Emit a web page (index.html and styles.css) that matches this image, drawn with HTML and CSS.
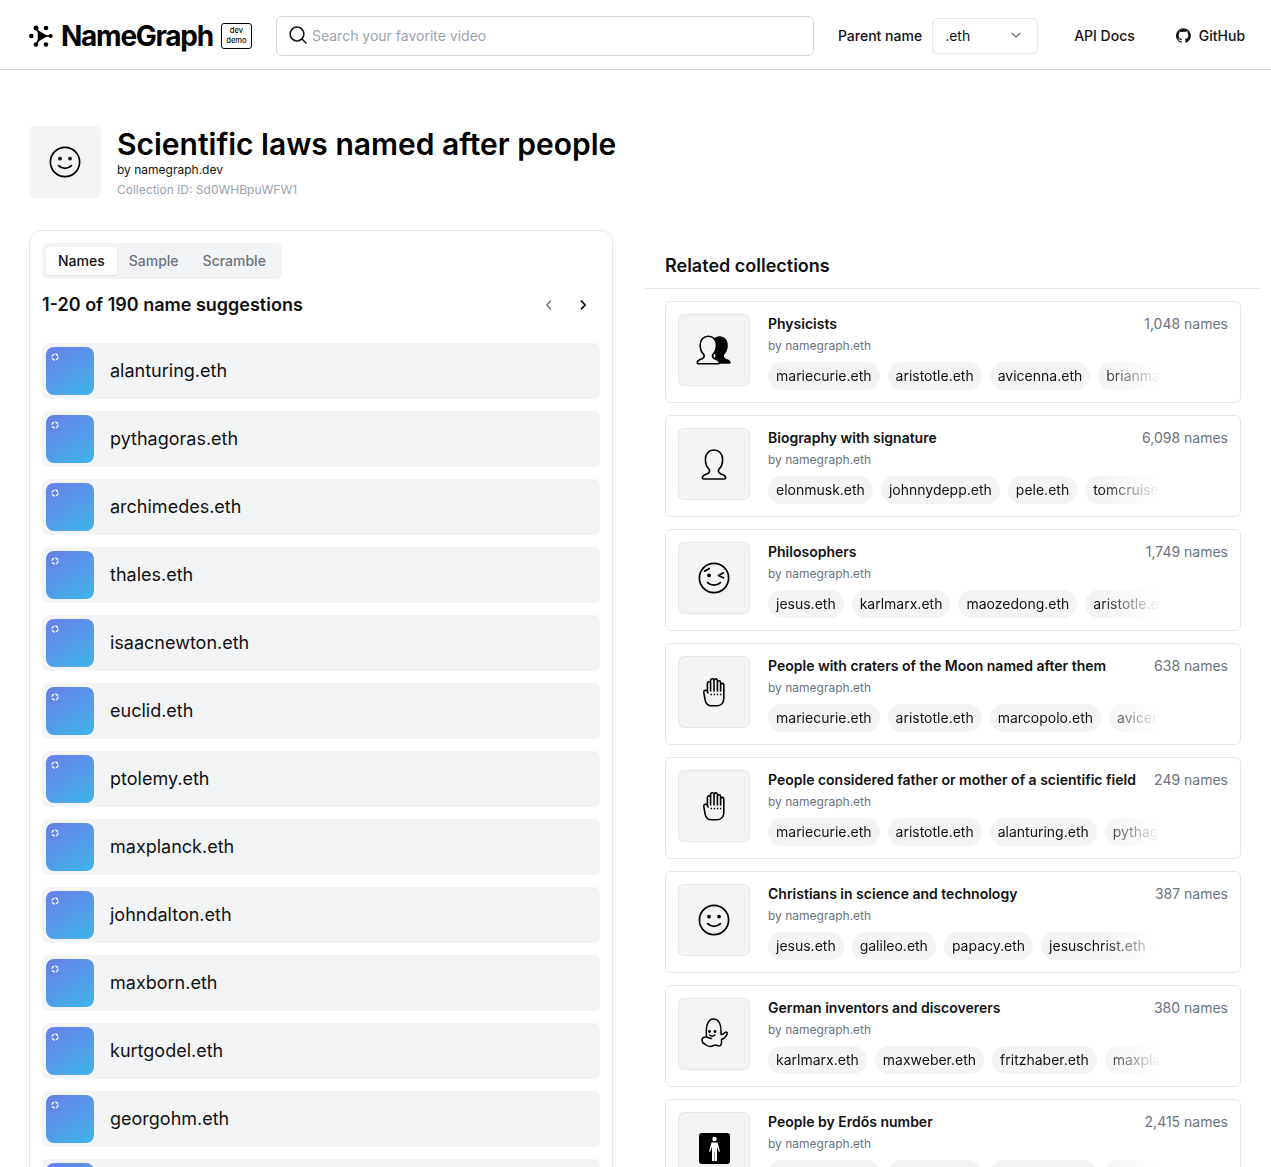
FILE: index.html
```html
<!DOCTYPE html>
<html lang="en">
<head>
    <meta charset="UTF-8">
    <meta name="viewport" content="width=device-width, initial-scale=1.0">
    <title>NameGraph - Scientific laws named after people</title>
    <link rel="stylesheet" href="styles.css">
</head>
<body>

    <svg class="sprites" width="0" height="0">
        <symbol id="ring" viewBox="0 0 8 8">
            <circle cx="4" cy="4" r="3" fill="none" stroke="#fff" stroke-width="1.3" stroke-dasharray="3.6 1.1"/>
        </symbol>
        <symbol id="smile" viewBox="0 0 32 32">
            <circle cx="16" cy="16" r="14.6" fill="none" stroke="#000" stroke-width="1.7"/>
            <circle cx="11" cy="12.6" r="1.9"/>
            <circle cx="21" cy="12.6" r="1.9"/>
            <path d="M9.6 19.6c3.4 3.6 9.4 3.6 12.8 0" fill="none" stroke="#000" stroke-width="1.7" stroke-linecap="round"/>
        </symbol>
        <symbol id="wink" viewBox="0 0 32 32">
            <circle cx="16" cy="16" r="14.6" fill="none" stroke="#000" stroke-width="1.7"/>
            <circle cx="11" cy="13.4" r="1.9"/>
            <path d="M6.6 9.2l4.6-2.8M25.4 10.8l-5 2.6 5 2.4M9.6 20.6c3.4 3.4 9.4 3.4 12.8 0" fill="none" stroke="#000" stroke-width="1.7" stroke-linecap="round" stroke-linejoin="round"/>
        </symbol>
        <symbol id="hand" viewBox="0 0 24 30">
            <path d="M5.4 15V6.4a1.6 1.6 0 0 1 3.2 0M8.6 14V3.4a1.7 1.7 0 0 1 3.4 0V14M12 3.6a1.7 1.7 0 0 1 3.4 0V14M15.4 5.4a1.6 1.6 0 0 1 3.2 0V14M18.6 8a1.6 1.6 0 0 1 3.2 0v13.4c0 4.4-2.8 7.4-7 7.4H9.4c-3.6 0-5.6-2.4-6.2-5.4l-1.4-8c-.3-2.2 2.6-3 3.6-.9l.6 1.5" fill="none" stroke="#000" stroke-width="1.6" stroke-linecap="round" stroke-linejoin="round"/>
            <path d="M8.6 17.5h11" fill="none" stroke="#000" stroke-width="1.4" stroke-dasharray="1.4 1.7"/>
        </symbol>
        <symbol id="person" viewBox="0 0 26 31">
            <path d="M13 1C7.800 1 4.400 5 4.400 10.500c0 4 1.600 8 4 10 .6 2-.4 3.500-2 4.200-2 .8-4.800 1.500-5 3.800-.1 1 .3 1.500 1.200 1.500h20.800c.9 0 1.300-.5 1.200-1.500-.2-2.300-3-3-5-3.800-1.600-.7-2.600-2.200-2-4.200 2.400-2 4-6 4-10C21.600 5 18.200 1 13 1z" fill="none" stroke="#000" stroke-width="1.6" stroke-linejoin="round"/>
        </symbol>
    </svg>

    <header class="topbar">
        <a class="logo" href="#">
            <svg class="logo-mark" width="24" height="22" viewBox="0 0 24 22">
                <path d="M12 11H22M12 11L7 3M12 11L7 19.500" stroke="#000" stroke-width="1.500"/>
                <path d="M9.500 6.500l7.500 4.500-7.500 4.500z" stroke="#000" stroke-width="1.500" stroke-linejoin="round"/>
                <circle cx="2.300" cy="11" r="2.300"/>
                <circle cx="21.700" cy="11" r="2"/>
                <circle cx="7" cy="3" r="2.500"/>
                <circle cx="17" cy="3" r="2.300"/>
                <circle cx="7" cy="19.500" r="2.300"/>
                <circle cx="17" cy="19.500" r="2.300"/>
            </svg>
            <span class="logo-text">NameGraph</span>
        </a>
        <span class="badge">dev<br>demo</span>
        <div class="search">
            <svg width="18" height="18" viewBox="0 0 18 18" fill="none" stroke="#111" stroke-width="1.5" stroke-linecap="round">
                <circle cx="8" cy="8" r="6.9"/>
                <path d="M13 13l4 4"/>
            </svg>
            <span>Search your favorite video</span>
        </div>
        <span class="nav-label">Parent name</span>
        <div class="select">
            <span>.eth</span>
            <svg width="12" height="12" viewBox="0 0 12 12" fill="none" stroke="#6b7280" stroke-width="1.3" stroke-linecap="round" stroke-linejoin="round">
                <path d="M2 4.200l4 3.800 4-3.800"/>
            </svg>
        </div>
        <a class="nav-link api-link" href="#">API Docs</a>
        <a class="nav-link github-link" href="#">
            <svg width="15" height="15" viewBox="0 0 16 16" fill="#111">
                <path d="M8 .2a8 8 0 0 0-2.500 15.600c.4.1.5-.2.5-.4v-1.400c-2.200.5-2.700-1-2.700-1-.4-.9-.9-1.200-.9-1.200-.7-.5.1-.5.1-.5.8.1 1.200.8 1.200.8.7 1.200 1.900.9 2.300.7.1-.5.3-.9.5-1.100-1.800-.2-3.600-.9-3.600-4 0-.9.3-1.600.8-2.100-.1-.2-.4-1 .1-2.100 0 0 .7-.2 2.200.8a7.600 7.600 0 0 1 4 0c1.500-1 2.200-.8 2.200-.8.400 1.100.200 1.900.100 2.100.500.600.800 1.300.800 2.100 0 3.100-1.900 3.700-3.600 3.900.300.300.500.800.500 1.500v2.200c0 .2.100.5.600.4A8 8 0 0 0 8 .2z"/>
            </svg>
            GitHub
        </a>
    </header>

    <main class="page">
        <section class="title-block">
            <div class="icon-box title-icon">
                <svg width="32" height="32"><use href="#smile"/></svg>
            </div>
            <div>
                <h1>Scientific laws named after people</h1>
                <p class="byline">by namegraph.dev</p>
                <p class="collection-id">Collection ID: Sd0WHBpuWFW1</p>
            </div>
        </section>

        <div class="columns">
            <section class="names-card">
                <div class="tabs">
                    <span class="tab active">Names</span>
                    <span class="tab">Sample</span>
                    <span class="tab">Scramble</span>
                </div>
                <div class="names-head">
                    <h2>1-20 of 190 name suggestions</h2>
                    <div class="pager">
                        <svg width="12" height="12" viewBox="0 0 12 12" fill="none" stroke="#6b7280" stroke-width="1.5" stroke-linecap="round" stroke-linejoin="round"><path d="M7.600 2L3.800 6l3.800 4"/></svg>
                        <svg width="12" height="12" viewBox="0 0 12 12" fill="none" stroke="#000" stroke-width="1.700" stroke-linecap="round" stroke-linejoin="round"><path d="M4.400 2l3.800 4-3.800 4"/></svg>
                    </div>
                </div>
                <ul class="name-list">
                    <li class="name-row"><span class="thumb"><svg width="8" height="8"><use href="#ring"/></svg></span>alanturing.eth</li>
                    <li class="name-row"><span class="thumb"><svg width="8" height="8"><use href="#ring"/></svg></span>pythagoras.eth</li>
                    <li class="name-row"><span class="thumb"><svg width="8" height="8"><use href="#ring"/></svg></span>archimedes.eth</li>
                    <li class="name-row"><span class="thumb"><svg width="8" height="8"><use href="#ring"/></svg></span>thales.eth</li>
                    <li class="name-row"><span class="thumb"><svg width="8" height="8"><use href="#ring"/></svg></span>isaacnewton.eth</li>
                    <li class="name-row"><span class="thumb"><svg width="8" height="8"><use href="#ring"/></svg></span>euclid.eth</li>
                    <li class="name-row"><span class="thumb"><svg width="8" height="8"><use href="#ring"/></svg></span>ptolemy.eth</li>
                    <li class="name-row"><span class="thumb"><svg width="8" height="8"><use href="#ring"/></svg></span>maxplanck.eth</li>
                    <li class="name-row"><span class="thumb"><svg width="8" height="8"><use href="#ring"/></svg></span>johndalton.eth</li>
                    <li class="name-row"><span class="thumb"><svg width="8" height="8"><use href="#ring"/></svg></span>maxborn.eth</li>
                    <li class="name-row"><span class="thumb"><svg width="8" height="8"><use href="#ring"/></svg></span>kurtgodel.eth</li>
                    <li class="name-row"><span class="thumb"><svg width="8" height="8"><use href="#ring"/></svg></span>georgohm.eth</li>
                    <li class="name-row"><span class="thumb"><svg width="8" height="8"><use href="#ring"/></svg></span></li>
                </ul>
            </section>

            <section class="related">
                <h2 class="related-title">Related collections</h2>
                <div class="related-list">

                    <article class="collection">
                        <div class="icon-box">
                            <svg width="36" height="30" viewBox="0 0 38 31">
                                <g transform="translate(12 0)"><path d="M13 1C7.800 1 4.400 5 4.400 10.500c0 4 1.600 8 4 10 .6 2-.4 3.500-2 4.200-2 .8-4.800 1.500-5 3.800-.1 1 .3 1.500 1.200 1.500h20.800c.9 0 1.300-.5 1.200-1.500-.2-2.300-3-3-5-3.800-1.600-.7-2.600-2.200-2-4.200 2.400-2 4-6 4-10C21.600 5 18.200 1 13 1z"/></g>
                                <path d="M13 1C7.800 1 4.400 5 4.400 10.500c0 4 1.600 8 4 10 .6 2-.4 3.500-2 4.200-2 .8-4.800 1.500-5 3.800-.1 1 .3 1.500 1.200 1.500h20.800c.9 0 1.300-.5 1.200-1.500-.2-2.300-3-3-5-3.800-1.600-.7-2.600-2.200-2-4.200 2.400-2 4-6 4-10C21.600 5 18.200 1 13 1z" fill="#f3f4f6" stroke="#000" stroke-width="1.700" stroke-linejoin="round"/>
                            </svg>
                        </div>
                        <div class="collection-body">
                            <div class="collection-head"><h3>Physicists</h3><span class="count">1,048 names</span></div>
                            <p class="collection-by">by namegraph.eth</p>
                            <div class="chips"><span class="chip">mariecurie.eth</span><span class="chip">aristotle.eth</span><span class="chip">avicenna.eth</span><span class="chip">brianmay.eth</span></div>
                        </div>
                    </article>

                    <article class="collection">
                        <div class="icon-box"><svg width="26" height="31"><use href="#person"/></svg></div>
                        <div class="collection-body">
                            <div class="collection-head"><h3>Biography with signature</h3><span class="count">6,098 names</span></div>
                            <p class="collection-by">by namegraph.eth</p>
                            <div class="chips"><span class="chip">elonmusk.eth</span><span class="chip">johnnydepp.eth</span><span class="chip">pele.eth</span><span class="chip">tomcruise.eth</span></div>
                        </div>
                    </article>

                    <article class="collection">
                        <div class="icon-box"><svg width="32" height="32"><use href="#wink"/></svg></div>
                        <div class="collection-body">
                            <div class="collection-head"><h3>Philosophers</h3><span class="count">1,749 names</span></div>
                            <p class="collection-by">by namegraph.eth</p>
                            <div class="chips"><span class="chip">jesus.eth</span><span class="chip">karlmarx.eth</span><span class="chip">maozedong.eth</span><span class="chip">aristotle.eth</span></div>
                        </div>
                    </article>

                    <article class="collection">
                        <div class="icon-box"><svg width="24" height="30"><use href="#hand"/></svg></div>
                        <div class="collection-body">
                            <div class="collection-head"><h3>People with craters of the Moon named after them</h3><span class="count">638 names</span></div>
                            <p class="collection-by">by namegraph.eth</p>
                            <div class="chips"><span class="chip">mariecurie.eth</span><span class="chip">aristotle.eth</span><span class="chip">marcopolo.eth</span><span class="chip">avicenna.eth</span></div>
                        </div>
                    </article>

                    <article class="collection">
                        <div class="icon-box"><svg width="24" height="30"><use href="#hand"/></svg></div>
                        <div class="collection-body">
                            <div class="collection-head"><h3>People considered father or mother of a scientific field</h3><span class="count">249 names</span></div>
                            <p class="collection-by">by namegraph.eth</p>
                            <div class="chips"><span class="chip">mariecurie.eth</span><span class="chip">aristotle.eth</span><span class="chip">alanturing.eth</span><span class="chip">pythagoras.eth</span></div>
                        </div>
                    </article>

                    <article class="collection">
                        <div class="icon-box"><svg width="32" height="32"><use href="#smile"/></svg></div>
                        <div class="collection-body">
                            <div class="collection-head"><h3>Christians in science and technology</h3><span class="count">387 names</span></div>
                            <p class="collection-by">by namegraph.eth</p>
                            <div class="chips"><span class="chip">jesus.eth</span><span class="chip">galileo.eth</span><span class="chip">papacy.eth</span><span class="chip">jesuschrist.eth</span></div>
                        </div>
                    </article>

                    <article class="collection">
                        <div class="icon-box">
                            <svg width="40" height="42" viewBox="0 0 40 42" fill="none" stroke="#000" stroke-width="1.500" stroke-linecap="round" stroke-linejoin="round">
                                <path d="M12.500 24C11.500 14 13.500 6 19.500 6 25 6 27.200 12 27 18v3.500c1.500.5 3-1 4-2 1.500-1 3 .5 2 2-1.500 3-3.500 4.500-5.500 5V30c0 2.500-2 3.500-4 2.500-1.500-.5-2.500-1-4 0-2.500 1.500-6 1-8-1-1.500-.5-3-1.500-3.500-3.500-.5-3 2-4.500 4.500-4 2 .5 3 1.500 5 1.500"/>
                                <path d="M15.500 22c1.500 1.300 4 1.300 5.500 0"/>
                                <circle cx="15.500" cy="18.500" r=".7" fill="#000"/>
                                <circle cx="21" cy="18.500" r=".7" fill="#000"/>
                            </svg>
                        </div>
                        <div class="collection-body">
                            <div class="collection-head"><h3>German inventors and discoverers</h3><span class="count">380 names</span></div>
                            <p class="collection-by">by namegraph.eth</p>
                            <div class="chips"><span class="chip">karlmarx.eth</span><span class="chip">maxweber.eth</span><span class="chip">fritzhaber.eth</span><span class="chip">maxplanck.eth</span></div>
                        </div>
                    </article>

                    <article class="collection">
                        <div class="icon-box">
                            <svg width="31" height="31" viewBox="0 0 31 31">
                                <rect width="31" height="31" rx="3"/>
                                <circle cx="15.500" cy="6" r="2.200" fill="#fff"/>
                                <path d="M12.500 9.500h6l2.500 9-1.200.3-1.800-5V28h-2.300v-9.500h-.4V28h-2.300V13.800l-1.800 5-1.200-.3z" fill="#fff"/>
                            </svg>
                        </div>
                        <div class="collection-body">
                            <div class="collection-head"><h3>People by Erdős number</h3><span class="count">2,415 names</span></div>
                            <p class="collection-by">by namegraph.eth</p>
                            <div class="chips"><span class="chip">mariecurie.eth</span><span class="chip">aristotle.eth</span><span class="chip">alanturing.eth</span><span class="chip">euclid.eth</span></div>
                        </div>
                    </article>

                </div>
            </section>
        </div>
    </main>

</body>
</html>
```

FILE: styles.css
```css
* {
    box-sizing: border-box;
}

html, body {
    height: 100vh;
    overflow: hidden;
}

body {
    font-family: Inter, "Liberation Sans", sans-serif;
    background: white;
    color: #111;
    margin: 0;
}

a {
    color: inherit;
    text-decoration: none;
}

h1, h2, h3, p, ul {
    margin: 0;
    padding: 0;
}

.sprites {
    position: absolute;
}

/* top bar */
.topbar {
    display: flex;
    align-items: center;
    height: 70px;
    padding: 3px 26px 0 29px;
    border-bottom: 1px solid #d1d5db;
    white-space: nowrap;
}

.logo {
    display: flex;
    flex: none;
    align-items: center;
    gap: 8px;
}

.logo-text {
    font-size: 28px;
    font-weight: 700;
    letter-spacing: -1.25px;
    color: #000;
}

.badge {
    flex: none;
    width: 31px;
    height: 26px;
    margin-left: 8px;
    border: 1px solid #000;
    border-radius: 3px;
    font-size: 7.5px;
    font-weight: 500;
    line-height: 10px;
    text-align: center;
    padding-top: 2px;
}

.search {
    display: flex;
    flex: none;
    align-items: center;
    gap: 5px;
    width: 538px;
    height: 40px;
    margin-left: 24px;
    padding: 0 0 2px 12px;
    border: 1px solid #d1d5db;
    border-radius: 6px;
    color: #9ca3af;
    font-size: 14px;
}

.nav-label {
    flex: none;
    margin-left: 24px;
    padding-bottom: 2px;
    font-size: 14px;
    font-weight: 500;
}

.select {
    display: flex;
    flex: none;
    align-items: center;
    justify-content: space-between;
    width: 106px;
    height: 36px;
    margin-left: 10px;
    padding: 0 15px 2px 12px;
    border: 1px solid #e5e7eb;
    border-radius: 6px;
    box-shadow: 0 1px 2px rgba(0, 0, 0, 0.05);
    font-size: 14px;
}

.nav-link {
    display: flex;
    flex: none;
    align-items: center;
    gap: 8px;
    padding-bottom: 2px;
    font-size: 14px;
    font-weight: 500;
}

.api-link {
    margin-left: 36px;
}

.github-link {
    margin-left: 41px;
}

/* title */
.page {
    padding: 56px 10px 0 29px;
}

.title-block {
    display: flex;
    gap: 16px;
}

.icon-box {
    display: flex;
    flex: none;
    align-items: center;
    justify-content: center;
    width: 72px;
    height: 72px;
    background: #f3f4f6;
    border: 1px solid #e5e7eb;
    border-radius: 6px;
}

.title-icon {
    border: none;
}

h1 {
    font-size: 30px;
    font-weight: 600;
    line-height: 36px;
    color: #000;
}

.byline {
    font-size: 12px;
    line-height: 16px;
}

.collection-id {
    font-size: 12px;
    line-height: 16px;
    margin-top: 4px;
    color: #9ca3af;
}

/* two columns */
.columns {
    display: grid;
    grid-template-columns: 584px 616px;
    gap: 32px;
    margin-top: 32px;
}

.names-card {
    padding: 12px;
    border: 1px solid #e5e7eb;
    border-radius: 12px;
}

.tabs {
    display: inline-flex;
    height: 36px;
    padding: 4px;
    background: #f3f4f6;
    border-radius: 6px;
}

.tab {
    display: flex;
    align-items: center;
    padding: 0 12px 1px;
    border-radius: 4px;
    font-size: 14px;
    font-weight: 500;
    color: #6b7280;
}

.tab.active {
    background: white;
    color: #111;
    box-shadow: 0 1px 2px rgba(0, 0, 0, 0.1);
}

.names-head {
    display: flex;
    align-items: center;
    justify-content: space-between;
    margin-top: 14px;
}

.names-head h2 {
    font-size: 18px;
    font-weight: 600;
    line-height: 24px;
}

.pager {
    display: flex;
    gap: 22px;
    padding-right: 11px;
}

.name-list {
    list-style: none;
    margin-top: 26px;
    display: flex;
    flex-direction: column;
    gap: 12px;
}

.name-row {
    display: flex;
    align-items: center;
    gap: 16px;
    height: 56px;
    padding: 4px;
    background: #f3f4f6;
    border-radius: 6px;
    font-size: 18px;
    line-height: 24px;
}

.thumb {
    display: block;
    flex: none;
    width: 48px;
    height: 48px;
    padding: 6px 0 0 5px;
    border-radius: 8px;
    background: linear-gradient(150deg, #6a7ee8, #3fb4e8);
}

.thumb svg {
    display: block;
}

/* related collections */
.related-title {
    font-size: 18px;
    font-weight: 600;
    line-height: 24px;
    padding: 24px 20px 10px;
    border-bottom: 1px solid #e5e7eb;
}

.related-list {
    display: flex;
    flex-direction: column;
    gap: 12px;
    padding: 12px 20px 0;
}

.collection {
    display: flex;
    flex: none;
    gap: 18px;
    height: 102px;
    padding: 12px;
    border: 1px solid #e5e7eb;
    border-radius: 6px;
}

.collection-body {
    flex: 1;
    min-width: 0;
}

.collection-head {
    display: flex;
    align-items: center;
    justify-content: space-between;
    height: 20px;
}

.collection-head h3 {
    font-size: 14px;
    font-weight: 600;
    line-height: 20px;
}

.count {
    padding-bottom: 2px;
    font-size: 14px;
    color: #6b7280;
}

.collection-by {
    margin-top: 4px;
    font-size: 12px;
    line-height: 16px;
    color: #6b7280;
}

.chips {
    display: flex;
    gap: 8px;
    width: 392px;
    margin-top: 8px;
    overflow: hidden;
    -webkit-mask-image: linear-gradient(to right, black 332px, transparent 392px);
    mask-image: linear-gradient(to right, black 332px, transparent 392px);
}

.chip {
    flex: none;
    padding: 0 8px;
    height: 28px;
    line-height: 28px;
    background: #f3f4f6;
    border-radius: 14px;
    font-size: 14px;
}
```
